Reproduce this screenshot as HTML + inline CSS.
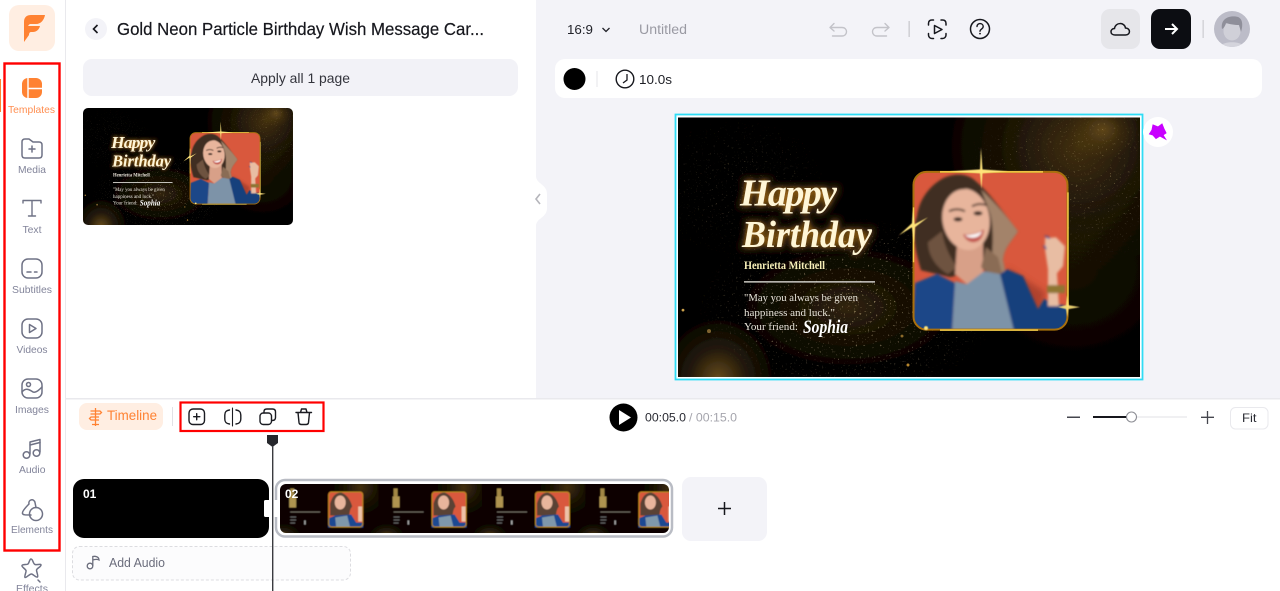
<!DOCTYPE html>
<html><head><meta charset="utf-8"><title>Editor</title>
<style>
html,body{margin:0;padding:0;background:#fff;width:1280px;height:591px;overflow:hidden}
svg{display:block;font-family:"Liberation Sans",sans-serif}
</style></head><body>
<svg width="1280" height="591" viewBox="0 0 1280 591" xmlns="http://www.w3.org/2000/svg">
<defs>
<filter id="b1" x="-10%" y="-10%" width="120%" height="120%"><feGaussianBlur stdDeviation="1.300"/></filter>
<filter id="b0" x="0" y="0" width="100%" height="100%"><feGaussianBlur stdDeviation=".35"/></filter>
<filter id="b2" x="-50%" y="-50%" width="200%" height="200%"><feGaussianBlur stdDeviation="3"/></filter>
<filter id="bs" x="-50%" y="-50%" width="200%" height="200%"><feGaussianBlur stdDeviation=".6"/></filter>
<filter id="glow" x="-30%" y="-50%" width="160%" height="200%">
<feGaussianBlur in="SourceAlpha" stdDeviation="3.500" result="a"/>
<feFlood flood-color="#ffa726" flood-opacity=".9"/><feComposite in2="a" operator="in" result="c"/>
<feMerge><feMergeNode in="c"/><feMergeNode in="SourceGraphic"/></feMerge>
</filter>
<filter id="speck" x="0" y="0" width="100%" height="100%">
<feTurbulence type="fractalNoise" baseFrequency="0.5" numOctaves="2" seed="7"/>
<feColorMatrix values="0 0 0 0 1  0 0 0 0 .8  0 0 0 0 .45  0 0 0 10 -7"/>
</filter>
<radialGradient id="gA"><stop offset="0" stop-color="#8f6a28" stop-opacity=".7"/><stop offset=".5" stop-color="#8f6a28" stop-opacity=".22"/><stop offset="1" stop-color="#8f6a28" stop-opacity="0"/></radialGradient>
<radialGradient id="gB"><stop offset="0" stop-color="#5a4113" stop-opacity=".7"/><stop offset=".5" stop-color="#5a4113" stop-opacity=".28"/><stop offset="1" stop-color="#5a4113" stop-opacity="0"/></radialGradient>
<radialGradient id="gM"><stop offset="0" stop-color="#fff"/><stop offset=".65" stop-color="#fff" stop-opacity=".55"/><stop offset="1" stop-color="#fff" stop-opacity="0"/></radialGradient>
<mask id="mk"><rect width="462" height="260" fill="#000"/><ellipse cx="170" cy="190" rx="150" ry="90" fill="url(#gM)"/><ellipse cx="400" cy="60" rx="120" ry="90" fill="url(#gM)" opacity=".5"/><ellipse cx="60" cy="70" rx="90" ry="70" fill="url(#gM)" opacity=".35"/></mask>
<clipPath id="pc"><rect x="235" y="54" width="155" height="159" rx="13"/></clipPath>
<clipPath id="cardc"><rect width="462" height="260"/></clipPath>

<g id="bg">
<rect width="462" height="260" fill="#050301"/>
<ellipse cx="400" cy="30" rx="130" ry="125" fill="url(#gB)"/>
<ellipse cx="425" cy="12" rx="36" ry="30" fill="url(#gA)" opacity=".7"/>
<ellipse cx="395" cy="150" rx="100" ry="90" fill="url(#gB)" opacity=".3"/>
<ellipse cx="170" cy="190" rx="105" ry="60" fill="url(#gB)" opacity=".75"/>
<ellipse cx="40" cy="262" rx="55" ry="60" fill="url(#gA)"/>
<rect width="462" height="260" filter="url(#speck)" mask="url(#mk)" opacity=".65"/>
<circle cx="31" cy="214" r="2" fill="#caa04c" opacity=".6"/><circle cx="5" cy="193" r="1.400" fill="#caa04c"/><circle cx="230" cy="248" r="1.500" fill="#b7862d"/><circle cx="224" cy="219" r="1.500" fill="#8b6a2a"/>
</g>

<g id="photo">
<g clip-path="url(#pc)">
<rect x="235" y="54" width="155" height="159" fill="#d9583c"/>
<path d="M329 150 L367 175 L362 195 L345 190Z" fill="#a53c2b" opacity=".8" filter="url(#b2)"/>
<g filter="url(#b1)">
<path d="M265 61 C280 54 292 58 298 64 C312 76 326 96 340 114 C334 124 326 130 325 143 C327 150 328 158 327 168 L305 152 L272 160 L243 153 C236 130 234 112 239 99 C241 82 252 68 265 61Z" fill="#3f2d22"/>
<path d="M303 72 C314 82 330 100 340 114 C334 124 326 130 325 143 C327 150 328 158 327 168 L314 158 C312 145 318 118 312 96Z" fill="#a3836a"/>
<path d="M250 125 C250 138 258 150 270 157 L279 150 C272 140 266 128 264 114Z" fill="#6e5240"/>
<path d="M279 128 L305 125 L305 155 L289 167 L277 157Z" fill="#d8a088"/>
<path d="M303 150 L314 158 L327 168 L320 140 L308 130Z" fill="#8a6c55"/>
<ellipse cx="288" cy="102" rx="23.500" ry="31" transform="rotate(-10 288 102)" fill="#e8b59c"/>
<path d="M264 100 C265 82 275 70 290 72 C278 70 268 66 258 82 Z" fill="#3f2d22"/>
<path d="M271 94 Q279 90 287 94 M294 89 Q301 85 309 88" stroke="#3a261b" stroke-width="1.800" fill="none"/>
<ellipse cx="280" cy="102" rx="4.500" ry="2.100" fill="#33221a"/><ellipse cx="300" cy="96" rx="4.500" ry="2.100" fill="#33221a"/>
<path d="M285 117 Q297 118 306 112 Q305 124 296 125 Q288 125 285 117Z" fill="#c2574f"/>
<path d="M287 118 Q297 118 304 114 Q302 120 295 120.500 Q290 120.500 287 118Z" fill="#fff"/>
<path d="M277 164 L289 167 L306 154 L322 157 L338 214 L274 214Z" fill="#7d93a8"/>
<path d="M237 166 L259 157 L277 166 L274 214 L234 214Z" fill="#1f4788"/>
<path d="M329 152 L345 159 L360 192 L366 182 L390 190 L390 214 L336 214 L322 157Z" fill="#193f7c"/>
<path d="M367 121 L378 120 L387 129 L385 149 L379 156 L381 189 L370 189 L370 152 L367 132Z" fill="#e8bda3"/>
<rect x="369" y="168" width="18" height="8" fill="#8f7433"/>
<path d="M367 119 L372 121 M366 128 L368 132" stroke="#2a4fa0" stroke-width="1.600"/>
</g>
</g>
<rect x="235.500" y="54.500" width="154" height="158" rx="13" fill="none" stroke="#a86f10" stroke-width="2"/>
<path d="M262 54.500 H365 M262 213 H360 M235.500 90 V145 M390 75 V190" stroke="#ffd84f" stroke-width="1.500" opacity=".9"/>
<g filter="url(#bs)">
<path d="M303 30 L304.500 52 L330 54 L304.500 56 L303.500 72 L302 56 L272 54 L302 52Z" fill="#ffe47a"/>
<path d="M235 92 L236.500 107 L250 100 L237 110 L236 126 L234 110 L221 118 L234 106Z" fill="#ffe47a"/>
<path d="M389 178 L390.500 188 L402 190 L390.500 192 L389.500 200 L388 192 L380 190 L388 188Z" fill="#ffe47a" opacity=".9"/>
<circle cx="248" cy="211" r="2" fill="#ffe47a"/>
</g>
</g>

<g id="mini">
<rect width="104" height="59" fill="#070401"/>
<ellipse cx="85" cy="8" rx="28" ry="28" fill="url(#gB)"/>
<ellipse cx="8" cy="58" rx="18" ry="14" fill="url(#gA)"/>
<rect x="53" y="12" width="35" height="36" rx="3" fill="#d9583c"/>
<path d="M55 24 Q58 13 66 13 Q74 16 77 27 Q74 30 74 38 L66 36 L55 36Z" fill="#5a4335"/>
<ellipse cx="65" cy="23" rx="5.500" ry="7" fill="#e8b59c"/>
<path d="M53 39 L60 36 L76 35 L81 43 L88 43 L88 48 L53 48Z" fill="#1f4a92"/>
<path d="M60 38 L72 36 L75 48 L61 48Z" fill="#7f98ab"/>
<rect x="83" y="27" width="4" height="15" fill="#edc2a8"/>
<rect x="53.500" y="12.500" width="34" height="35" rx="3" fill="none" stroke="#b8881e" stroke-width="1"/>
<rect x="15" y="9" width="4" height="8" fill="#cba955" opacity=".8"/><rect x="14" y="17" width="7" height="11" fill="#d9b864" opacity=".8"/>
<rect x="15" y="32" width="30" height="1" fill="#6f6b60"/>
<rect x="15" y="37" width="6" height="1" fill="#666"/><rect x="15" y="40" width="6" height="1" fill="#666"/><rect x="15" y="43" width="5" height="1" fill="#666"/>
<rect x="29" y="41" width="1.500" height="4" fill="#aaa"/>
</g>
<clipPath id="thumbc"><rect x="83" y="108" width="210" height="117" rx="5"/></clipPath>
<clipPath id="stripc"><rect x="280" y="484" width="389" height="49" rx="6"/></clipPath>
</defs>

<rect width="1280" height="591" fill="#fff"/>
<!-- right stage -->
<rect x="536" y="0" width="744" height="398" fill="#f3f3f8"/>
<path d="M536 170 V176 C536 184 547 184 547 194 V208 C547 218 536 218 536 226 V232 H530 V170Z" fill="#fff"/>
<path d="M540 194 L536 199 L540 204" stroke="#b5b5bb" stroke-width="1.600" fill="none"/>
<rect x="65" y="0" width="1" height="591" fill="#e9e9ed"/>
<rect x="66" y="398" width="1214" height="1.500" fill="#e9e9ed"/>

<!-- logo -->
<rect x="9" y="5" width="46" height="46" rx="10" fill="#ffeee2"/>
<path d="M24 22 C24 17 27 15 31 15 H45 C44 20 41 24 36 24 H31 C29 24 29 25 28 26 H40 C39 30 36 32 33 32 H31 C30 32 29 33 29 35 L24 42Z" fill="#ff8232"/>

<!-- sidebar -->
<rect x="0" y="79" width="1" height="33" fill="#ff8232"/>
<rect x="22" y="78" width="20" height="20" rx="6" fill="#ff8232"/>
<path d="M28 78 V98 M28 88.500 H42" stroke="#fff" stroke-width="1.400"/>
<g fill="none" stroke="#6f7285" stroke-width="1.500" stroke-linecap="round" stroke-linejoin="round">
<path d="M22 142 C22 140 23 139 25 139 H29 L33 142 H39 C41 142 42 143 42 145 V155 C42 157 41 158 39 158 H25 C23 158 22 157 22 155Z"/><path d="M29 149 H35 M32 146 V152"/>
<path d="M23 203 V200.500 H41 V203 M32 200.500 V216 M28.500 216 H35.500" stroke-width="1.400"/>
<rect x="22" y="259" width="20" height="19" rx="6"/><path d="M27 272 H31 M34.500 272 H37"/>
<rect x="22" y="319" width="20" height="19" rx="6"/><path d="M29.500 324.500 L36 328.500 L29.500 332.500Z"/>
<rect x="22" y="379" width="20" height="19" rx="6"/><circle cx="28.500" cy="384.500" r="2"/><path d="M22 392 C26 387 30 390 33 392 C36 393 39 390 42 387"/>
<path d="M30 454 V442 L40 439.500 V452"/><path d="M30 445 L40 442.500"/><circle cx="26.500" cy="455" r="3.300"/><circle cx="36.500" cy="453" r="3.300"/>
<path d="M29 504 C24 509 22 512 22.500 513.500 C23 515 25 515 31 515 M29 504 C28 499.500 34 498 35 502.500 L36 507.500"/><circle cx="36" cy="514" r="6.500"/>
<path d="M31 559 C33 559 33 564 35 564.500 C37 565 41 563.500 41 565 C41 567 37 568 36.500 570 C36.500 572 38.500 576 37.500 577 C36 578 33 574 31.500 574 C29.500 574 26 578 25 577.500 C24 576.500 26.500 572 26 570.500 C25 568.500 21.500 567 22 565.500 C23 564 27 565 28 564 C29.500 562.500 29.500 559 31 559Z"/><path d="M38 580 L40 582"/>
</g>
<g font-size="10.500" fill="#82849a">
<text x="8" y="113" fill="#ff8f52" textLength="47" lengthAdjust="spacingAndGlyphs">Templates</text>
<text x="18" y="173" textLength="28" lengthAdjust="spacingAndGlyphs">Media</text>
<text x="22.500" y="233" textLength="19" lengthAdjust="spacingAndGlyphs">Text</text>
<text x="12" y="293" textLength="40" lengthAdjust="spacingAndGlyphs">Subtitles</text>
<text x="16.500" y="353" textLength="31" lengthAdjust="spacingAndGlyphs">Videos</text>
<text x="15" y="413" textLength="34" lengthAdjust="spacingAndGlyphs">Images</text>
<text x="19" y="473" textLength="26.500" lengthAdjust="spacingAndGlyphs">Audio</text>
<text x="11" y="533" textLength="42" lengthAdjust="spacingAndGlyphs">Elements</text>
<text x="16" y="592" textLength="32" lengthAdjust="spacingAndGlyphs">Effects</text>
</g>
<rect x="4.500" y="63.500" width="55" height="487" fill="none" stroke="#f00" stroke-width="2.400"/>

<!-- left panel -->
<circle cx="96" cy="29" r="11" fill="#f3f3f8"/>
<path d="M97.500 25 L93.500 29 L97.500 33" fill="none" stroke="#15161c" stroke-width="1.600"/>
<text x="117" y="35" font-size="17.500" fill="#16171d" stroke="#16171d" stroke-width=".2" textLength="367" lengthAdjust="spacingAndGlyphs">Gold Neon Particle Birthday Wish Message Car...</text>
<rect x="83" y="59" width="435" height="37" rx="9" fill="#f2f2f7"/>
<text x="251" y="83" font-size="14" fill="#33343c" textLength="99" lengthAdjust="spacingAndGlyphs">Apply all 1 page</text>
<g clip-path="url(#thumbc)"><g transform="translate(83 108) scale(.4545 .4519)" filter="url(#b0)">
<use href="#bg"/><use href="#photo"/>
<g fill="#fff6d6" filter="url(#glow)" font-family="'Liberation Serif',serif" font-style="italic" font-weight="700">
<text x="62" y="88" font-size="38" textLength="97" lengthAdjust="spacing">Happy</text>
<text x="64" y="130" font-size="38" textLength="130" lengthAdjust="spacingAndGlyphs">Birthday</text>
</g>
<g font-family="'Liberation Serif',serif" fill="#e8e4da">
<text x="66" y="152" font-size="11.500" font-weight="700" textLength="81" lengthAdjust="spacingAndGlyphs">Henrietta Mitchell</text>
<rect x="66" y="164" width="131" height="2" fill="#d8d6d0"/>
<text x="66" y="184" font-size="11" textLength="114" lengthAdjust="spacingAndGlyphs">"May you always be given</text>
<text x="66" y="199" font-size="11" textLength="91" lengthAdjust="spacingAndGlyphs">happiness and luck."</text>
<text x="66" y="213" font-size="11" textLength="54" lengthAdjust="spacingAndGlyphs">Your friend:</text>
<text x="125" y="216" font-size="19" font-style="italic" font-weight="700" fill="#fff" textLength="45" lengthAdjust="spacingAndGlyphs">Sophia</text>
</g>
</g></g>

<!-- top bar -->
<text x="567" y="34" font-size="12.500" fill="#22232a" textLength="26" lengthAdjust="spacingAndGlyphs">16:9</text>
<path d="M602.500 28 L606 31.500 L609.500 28" fill="none" stroke="#22232a" stroke-width="1.300"/>
<text x="639" y="34" font-size="13.500" fill="#9a9aa3" textLength="48" lengthAdjust="spacingAndGlyphs">Untitled</text>
<g fill="none" stroke="#c3c3c9" stroke-width="1.400" stroke-linecap="round" stroke-linejoin="round">
<path d="M834 23.500 L830 27.500 L834 31 M830.500 27.500 H842 C848 27.500 848 36 842 36 H832.500"/>
<path d="M885 23.500 L889 27.500 L885 31 M888.500 27.500 H877 C871 27.500 871 36 877 36 H886.500"/>
</g>
<rect x="908.500" y="21" width="1.300" height="16" fill="#c9c9ce"/>
<g fill="none" stroke="#17181e" stroke-width="1.500" stroke-linecap="round" stroke-linejoin="round">
<path d="M928.500 25 V23.500 C928.500 21 930 20 932 20 H933.500 M941 20 H942.500 C944.500 20 946 21 946 23.500 V25 M946 33.500 V35 C946 37 944.500 38.500 942.500 38.500 H941 M933.500 38.500 H932 C930 38.500 928.500 37 928.500 35 V33.500"/>
<path d="M934.500 25.500 L942 29.500 L934.500 33.500Z"/>
<circle cx="980" cy="29" r="9.500"/>
<path d="M977 26.500 C977 22.500 983.200 22.800 983.200 26.500 C983.200 29 980 29 980 31.300" stroke-width="1.400"/>
</g>
<circle cx="980" cy="33.600" r=".9" fill="#17181e"/>
<rect x="1101" y="9" width="39" height="40" rx="9" fill="#e6e6ea"/>
<path d="M1115 35 C1109.500 35 1110 28.500 1114.500 28.500 C1115.500 22 1124.500 22 1125.500 28 C1130.500 28 1131 35 1125.500 35Z" fill="none" stroke="#17181e" stroke-width="1.500"/>
<rect x="1151" y="9" width="40" height="40" rx="9" fill="#0c0d12"/>
<path d="M1165 29 H1177 M1172 24 L1177 29 L1172 34" fill="none" stroke="#fff" stroke-width="2"/>
<rect x="1202.500" y="20" width="1.300" height="18" fill="#cfcfd4"/>
<clipPath id="avc"><circle cx="1232" cy="29" r="18"/></clipPath>
<circle cx="1232" cy="29" r="18" fill="#bcbcc8"/>
<g clip-path="url(#avc)">
<path d="M1220 46 C1224 41 1240 41 1244 46 V50 H1220Z" fill="#d4d4dc"/>
<ellipse cx="1232" cy="31" rx="8.500" ry="9.500" fill="#d0d0d8"/>
<path d="M1222 29 C1220 17 1232 15 1238 17 C1243 19 1243 26 1241 32 L1239 25 C1234 25 1229 24 1226 23 C1225 26 1224 28 1222 29Z" fill="#8f8f9a"/>
</g>
<rect x="555" y="59" width="707" height="39" rx="10" fill="#fff"/>
<circle cx="574.500" cy="79" r="11" fill="#000"/>
<rect x="596.500" y="71" width="1" height="16" fill="#e4e4e8"/>
<circle cx="625" cy="79" r="8.800" fill="none" stroke="#17181e" stroke-width="1.400"/>
<path d="M627 74 V80 L623 83" fill="none" stroke="#17181e" stroke-width="1.300"/>
<text x="639" y="84" font-size="13" fill="#1d1e24" textLength="33" lengthAdjust="spacingAndGlyphs">10.0s</text>

<!-- canvas -->
<rect x="675.500" y="114.500" width="467" height="265" fill="#fff" stroke="#2fdcf5" stroke-width="1.800"/>
<g transform="translate(678 117.500) scale(1 .998)" clip-path="url(#cardc)">
<g filter="url(#b0)">
<use href="#bg"/><use href="#photo"/>
<g fill="#fff6d6" filter="url(#glow)" font-family="'Liberation Serif',serif" font-style="italic" font-weight="700">
<text x="62" y="88" font-size="38" textLength="97" lengthAdjust="spacing">Happy</text>
<text x="64" y="130" font-size="38" textLength="130" lengthAdjust="spacingAndGlyphs">Birthday</text>
</g>
<g font-family="'Liberation Serif',serif">
<text x="66" y="152" font-size="11.500" font-weight="700" fill="#f6efb8" textLength="81" lengthAdjust="spacingAndGlyphs">Henrietta Mitchell</text>
<rect x="66" y="164" width="131" height="1.400" fill="#d8d6d0"/>
<text x="66" y="184" font-size="11" fill="#e8e4da" textLength="114" lengthAdjust="spacingAndGlyphs">"May you always be given</text>
<text x="66" y="199" font-size="11" fill="#e8e4da" textLength="91" lengthAdjust="spacingAndGlyphs">happiness and luck."</text>
<text x="66" y="213" font-size="11" fill="#e8e4da" textLength="54" lengthAdjust="spacingAndGlyphs">Your friend:</text>
<text x="125" y="216" font-size="19" font-style="italic" font-weight="700" fill="#fff" textLength="45" lengthAdjust="spacingAndGlyphs">Sophia</text>
</g>
</g>
</g>
<circle cx="1158" cy="132" r="15" fill="#fff"/>
<path d="M1153 125 L1158 127 L1162 124 L1164 129 L1166 133 L1163 135 L1165.500 139 L1160 136 L1156 138.500 L1153 135 L1149.500 134 L1152 130Z" fill="#c800ff" stroke="#c800ff" stroke-width="1"/>

<!-- timeline bar -->
<rect x="79" y="403" width="84" height="27" rx="8" fill="#ffeee2"/>
<path d="M95.500 408 V426 M90.500 411 H100 L101.500 412.500 L100 414 H90.500 M99 417 H91 L89.500 418.500 L91 420 H99 M92 424.500 H99" fill="none" stroke="#ff8232" stroke-width="1.300"/>
<text x="107" y="420" font-size="13.500" fill="#ff8232" textLength="50" lengthAdjust="spacingAndGlyphs">Timeline</text>
<rect x="172" y="407" width="1" height="19" fill="#e1e1e5"/>
<g fill="none" stroke="#1a1b21" stroke-width="1.400" stroke-linecap="round" stroke-linejoin="round">
<rect x="189" y="409" width="15.500" height="15.500" rx="4"/><path d="M193.700 416.700 H199.800 M196.700 413.700 V419.800"/>
<path d="M229.500 410 C226 410.500 224.800 412 224.800 415 V419 C224.800 422 226 423.500 229.500 424"/><path d="M236 410 C239.500 410.500 240.800 412 240.800 415 V419 C240.800 422 239.500 423.500 236 424"/><path d="M232.500 408 V426" stroke-width="1.100"/>
<rect x="260" y="413" width="11.500" height="11.500" rx="3.200"/><path d="M264 413 V411.500 C264 410 265 409 266.800 409 H272.500 C274.300 409 275.500 410 275.500 412 V417.500 C275.500 419.300 274.500 420.500 272 420.500"/>
<path d="M296 412.500 H311.500 M300.500 412.500 L301.500 409 H306 L307 412.500 M298 412.500 L299 422.500 C299.200 424 300 424.500 301.500 424.500 H306 C307.500 424.500 308.300 424 308.500 422.500 L309.500 412.500"/>
</g>
<rect x="180.500" y="402.500" width="143" height="28.500" fill="none" stroke="#f00" stroke-width="2.200"/>

<circle cx="623.500" cy="417.500" r="14" fill="#000"/>
<path d="M619 410 L631 417.500 L619 425Z" fill="#fff"/>
<text x="645" y="421.500" font-size="12" fill="#2a2b33" textLength="41" lengthAdjust="spacingAndGlyphs">00:05.0</text>
<text x="689" y="421.500" font-size="12" fill="#a5a5ad" textLength="48" lengthAdjust="spacingAndGlyphs">/ 00:15.0</text>
<rect x="1067" y="416.500" width="13" height="1.500" fill="#45464e"/>
<rect x="1093" y="416.500" width="94" height="1" fill="#e2e2e6"/>
<rect x="1093" y="416" width="38" height="2" fill="#16171d"/>
<circle cx="1131.500" cy="417" r="5" fill="#fff" stroke="#8d8e95" stroke-width="1.100"/>
<path d="M1201 417.300 H1214 M1207.500 411 V424" stroke="#45464e" stroke-width="1.300"/>
<rect x="1230.500" y="407.500" width="37.500" height="21.500" rx="5" fill="#fff" stroke="#e9e9ed"/>
<text x="1242" y="422" font-size="12" fill="#2a2b33" textLength="14.500" lengthAdjust="spacingAndGlyphs">Fit</text>

<!-- tracks -->
<rect x="73" y="479" width="196" height="59" rx="11" fill="#000"/>
<text x="83" y="498" font-size="12" font-weight="700" fill="#fff">01</text>
<rect x="276" y="480" width="396" height="56.500" rx="9" fill="#fff" stroke="#b9bcc4" stroke-width="2.500"/>
<g clip-path="url(#stripc)"><g filter="url(#bs)">
<use href="#mini" x="275.200" y="479.500"/><use href="#mini" x="378.600" y="479.500"/><use href="#mini" x="482" y="479.500"/><use href="#mini" x="585.400" y="479.500"/>
</g></g>
<text x="285" y="498" font-size="12" font-weight="700" fill="#fff">02</text>
<rect x="264" y="500" width="8" height="17" rx="1.500" fill="#fff"/>
<rect x="273" y="500" width="7" height="17" rx="1.500" fill="#fff"/>
<rect x="682" y="477" width="85" height="64" rx="9" fill="#f3f3f8"/>
<path d="M718 508.500 H731 M724.500 502 V515" stroke="#16171d" stroke-width="1.500"/>
<rect x="72.500" y="546.500" width="278" height="33.500" rx="7" fill="#fcfcfd" stroke="#dcdce0" stroke-dasharray="3 2"/>
<g fill="none" stroke="#6b6d7c" stroke-width="1.300">
<circle cx="90" cy="566" r="2.800"/><path d="M92.800 566 V556.500 C95 556 99 556.500 99 560 C97 558.800 94.500 559.500 92.800 560"/>
</g>
<text x="109" y="567" font-size="12.500" fill="#6b6d7c" textLength="56" lengthAdjust="spacingAndGlyphs">Add Audio</text>
<path d="M267 435 H278 V443 L272.500 447 L267 443Z" fill="#26272c"/>
<rect x="272" y="446" width="1.400" height="145" fill="#3a3b40"/>
</svg>
</body></html>
